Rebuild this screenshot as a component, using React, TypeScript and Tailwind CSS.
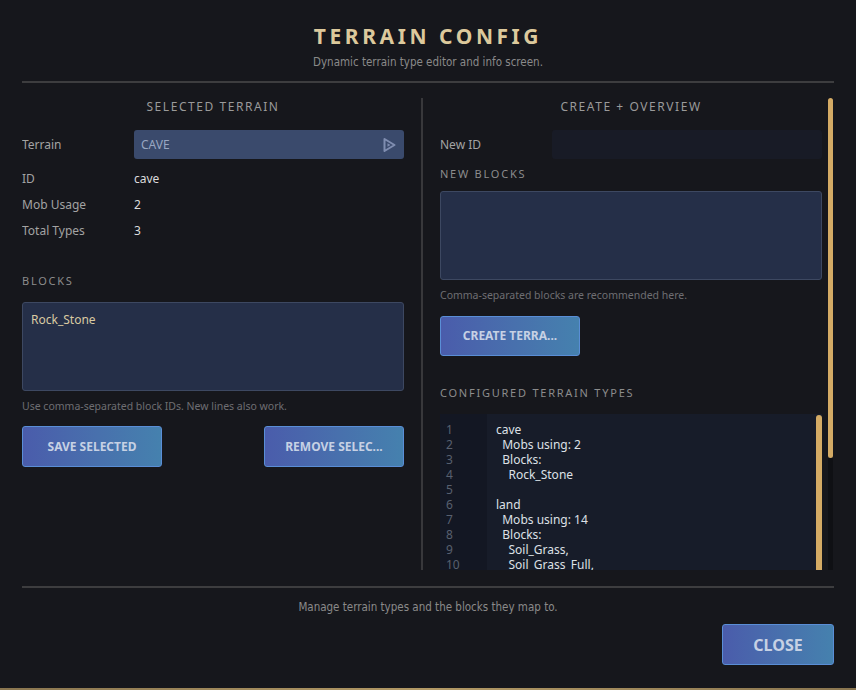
import React from "react";

const sans = { fontFamily: '"Noto Sans", "Open Sans", sans-serif' };
const narrow = { fontFamily: '"DejaVu Sans Condensed", "Liberation Sans Narrow", "Liberation Sans", sans-serif' };

const codeLines = [
      "cave",
      "  Mobs using: 2",
      "  Blocks:",
      "    Rock_Stone",
      "",
      "land",
      "  Mobs using: 14",
      "  Blocks:",
      "    Soil_Grass,",
      "    Soil_Grass_Full,",
];

function BlueButton({ label, className = "" }: { label: string; className?: string }) {
      return (
            <button className={"flex items-center justify-center rounded-[3px] border border-[#5a8ed6] bg-gradient-to-r from-[#4a5cab] to-[#4581ae] font-bold text-[#c6d1e4] " + className}>
                  {label}
            </button>
      );
}

function SectionTitle({ text }: { text: string }) {
      return <div className="h-[18px] text-center text-[12px] leading-[18px] tracking-[0.13em] text-[#9a9a9a]">{text}</div>;
}

function SubLabel({ text, className = "" }: { text: string; className?: string }) {
      return <div className={"h-[16px] text-[11px] leading-[16px] tracking-[0.16em] text-[#8c8c8c] " + className}>{text}</div>;
}

export default function App() {
      return (
            <div className="flex h-[690px] w-[856px] flex-col overflow-hidden bg-[#16171c]" style={sans}>
                  <div className="flex flex-1 flex-col px-[22px]">
                        {/* header */}
                        <div className="pt-[22px] text-center text-[21px] font-bold leading-[28px] tracking-[0.17em] text-[#dcc99c]">TERRAIN CONFIG</div>
                        <div className="mt-[4px] text-center text-[11.5px] leading-[16px] text-[#8a8a8a]" style={narrow}>
                              Dynamic terrain type editor and info screen.
                        </div>
                        <div className="mt-[11px] h-[2px] bg-[#3d3d3f]" />

                        {/* body */}
                        <div className="mt-[15px] flex h-[472px] shrink-0 overflow-hidden">
                              {/* left column */}
                              <div className="flex w-[382px] flex-col *:shrink-0">
                                    <SectionTitle text="SELECTED TERRAIN" />
                                    <div className="mt-[14px] flex h-[29px] items-center">
                                          <div className="w-[112px] text-[12px] text-[#a3a3a3]">Terrain</div>
                                          <div className="flex h-full flex-1 items-center justify-between rounded-[3px] bg-[#3a4a6c] pl-[7px] pr-[8px]">
                                                <span className="text-[12px] text-[#98a6c2]">CAVE</span>
                                                <svg width="14" height="16" viewBox="0 0 14 16">
                                                      <path d="M2.5 2 L12.5 8 L2.5 14 Z" fill="none" stroke="#7f8db0" strokeWidth="2" strokeLinejoin="round" />
                                                      <path d="M5.5 6.3 L8.5 8 L5.5 9.7 Z" fill="#7f8db0" />
                                                </svg>
                                          </div>
                                    </div>
                                    <div className="mt-[7px] flex flex-col">
                                          {[
                                                ["ID", "cave"],
                                                ["Mob Usage", "2"],
                                                ["Total Types", "3"],
                                          ].map(([k, v]) => (
                                                <div key={k} className="flex h-[26px] items-center text-[12px]">
                                                      <div className="w-[112px] text-[#a3a3a3]">{k}</div>
                                                      <div className="text-[#dcdcdc]">{v}</div>
                                                </div>
                                          ))}
                                    </div>
                                    <SubLabel text="BLOCKS" className="mt-[29px]" />
                                    <div className="mt-[13px] h-[89px] rounded-[3px] border border-[#3d4861] bg-[#252f48] px-[8px] py-[8px] text-[12px] leading-[18px] text-[#d9caa2]">
                                          Rock_Stone
                                    </div>
                                    <div className="mt-[8px] h-[14px] text-[10.5px] leading-[14px] text-[#6e6e72]">Use comma-separated block IDs. New lines also work.</div>
                                    <div className="mt-[13px] flex justify-between">
                                          <BlueButton label="SAVE SELECTED" className="h-[41px] w-[140px] text-[12px]" />
                                          <BlueButton label="REMOVE SELEC..." className="h-[41px] w-[140px] text-[12px]" />
                                    </div>
                              </div>

                              {/* divider */}
                              <div className="mx-[17px] w-[2px] bg-[#38383b]" />

                              {/* right column */}
                              <div className="flex w-[382px] flex-col *:shrink-0">
                                    <SectionTitle text="CREATE + OVERVIEW" />
                                    <div className="mt-[14px] flex h-[29px] items-center">
                                          <div className="w-[112px] text-[12px] text-[#a3a3a3]">New ID</div>
                                          <div className="h-full flex-1 rounded-[3px] bg-[#181b26]" />
                                    </div>
                                    <SubLabel text="NEW BLOCKS" className="mt-[7px]" />
                                    <div className="mt-[9px] h-[89px] rounded-[3px] border border-[#3d4861] bg-[#252f48]" />
                                    <div className="mt-[8px] h-[14px] text-[10.5px] leading-[14px] text-[#6e6e72]">Comma-separated blocks are recommended here.</div>
                                    <BlueButton label="CREATE TERRA..." className="mt-[14px] h-[40px] w-[140px] text-[12px]" />
                                    <SubLabel text="CONFIGURED TERRAIN TYPES" className="mt-[29px]" />
                                    <div className="mt-[13px] flex h-[170px] bg-[#171c29]">
                                          <div className="w-[47px] shrink-0 bg-[#131723] pl-[6px] pt-[8px] text-[12px] leading-[15px] text-[#58606f]">
                                                {codeLines.map((_, i) => (
                                                      <div key={i} className="h-[15px]">{i + 1}</div>
                                                ))}
                                          </div>
                                          <div className="flex-1 whitespace-pre pl-[9px] pt-[8px] text-[12px] leading-[15px] text-[#dde0e6]">
                                                {codeLines.map((l, i) => (
                                                      <div key={i} className="h-[15px]">{l}</div>
                                                ))}
                                          </div>
                                          <div className="w-[6px] shrink-0 pt-[1px]">
                                                <div className="h-full rounded-t-full bg-[#d4ab65]" />
                                          </div>
                                    </div>
                              </div>

                              {/* outer scrollbar */}
                              <div className="ml-[6px] flex w-[5px] flex-col">
                                    <div className="h-[360px] rounded-full bg-[#d4ab65]" />
                                    <div className="flex-1 bg-[#0f1014]" />
                              </div>
                        </div>

                        {/* footer */}
                        <div className="mt-[16px] h-[2px] bg-[#3d3d3f]" />
                        <div className="mt-[11px] text-center text-[11.5px] leading-[16px] text-[#8a8a8a]" style={narrow}>
                              Manage terrain types and the blocks they map to.
                        </div>
                        <div className="mt-[9px] flex justify-end">
                              <BlueButton label="CLOSE" className="h-[41px] w-[112px] text-[16px]" />
                        </div>
                  </div>
                  <div className="h-[2px] bg-gradient-to-r from-[#8a7650] via-[#b39a66] to-[#8a7650]" />
            </div>
      );
}
